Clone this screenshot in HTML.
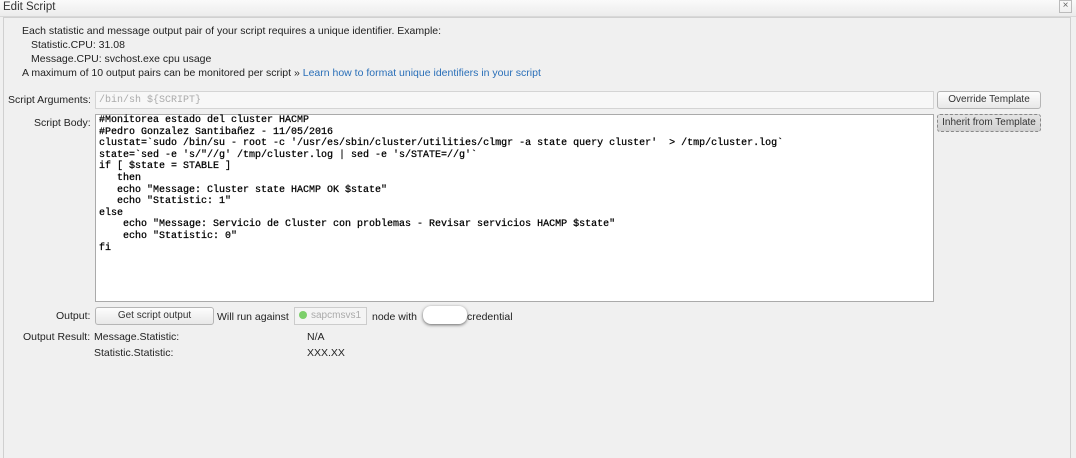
<!DOCTYPE html>
<html><head><style>
body{margin:0;width:1076px;height:452px;background:#f0f0f0;font-family:"Liberation Sans",sans-serif;font-size:10.5px;color:#222;position:relative;overflow:hidden}
.a{position:absolute;white-space:pre}
.title{position:absolute;left:0;top:0;width:1076px;height:16px;background:linear-gradient(#fafafa,#ececec);border-bottom:1px solid #d8d8d8}
.panel{position:absolute;left:3px;top:17px;width:1066px;height:440px;border:1px solid #d0d0d0;border-bottom:none;background:#f0f0f0}
.inp{position:absolute;background:#f7f7f7;border:1px solid #d4d4d4}
.btn{position:absolute;border:1px solid #b5b5b5;border-radius:3px;background:linear-gradient(#fdfdfd,#e8e8e8);text-align:center;font-size:10px;color:#333}
.mono{font-family:"Liberation Mono",monospace;font-size:10px;line-height:11.6px;color:#000;-webkit-text-stroke:0.25px #000}
</style></head><body>
<div class="title"></div>
<div class="a" style="left:3px;top:1px;font-size:11.5px;color:#333">Edit Script</div>
<div class="a" style="left:1059px;top:0;width:11px;height:11px;border:1px solid #bbb;font-size:10px;line-height:10px;text-align:center;color:#666">×</div>
<div class="panel"></div>
<div class="a" style="left:22px;top:25px">Each statistic and message output pair of your script requires a unique identifier. Example:</div>
<div class="a" style="left:31px;top:39px">Statistic.CPU: 31.08</div>
<div class="a" style="left:31px;top:53px">Message.CPU: svchost.exe cpu usage</div>
<div class="a" style="left:22px;top:67px">A maximum of 10 output pairs can be monitored per script » <span style="color:#2a6fb8">Learn how to format unique identifiers in your script</span></div>
<div class="a" style="left:8px;top:94px">Script Arguments:</div>
<div class="inp" style="left:95px;top:91px;width:837px;height:16px"></div>
<div class="a mono" style="left:99px;top:95px;color:#aaa;-webkit-text-stroke:0">/bin/sh ${SCRIPT}</div>
<div class="btn" style="left:937px;top:91px;width:102px;height:16px;line-height:16px">Override Template</div>
<div class="btn" style="left:937px;top:114px;width:102px;height:16px;line-height:16px;background:linear-gradient(#e4e4e4,#d0d0d0);border-style:dashed;border-color:#888">Inherit from Template</div>
<div class="a" style="left:34px;top:117px">Script Body:</div>
<div class="inp" style="left:95px;top:114px;width:837px;height:186px;background:#fff;border-color:#aaa"></div>
<div class="a mono" style="left:99px;top:115px">#Monitorea estado del cluster HACMP
#Pedro Gonzalez Santibañez - 11/05/2016
clustat=`sudo /bin/su - root -c '/usr/es/sbin/cluster/utilities/clmgr -a state query cluster'  > /tmp/cluster.log`
state=`sed -e 's/"//g' /tmp/cluster.log | sed -e 's/STATE=//g'`
if [ $state = STABLE ]
   then
   echo "Message: Cluster state HACMP OK $state"
   echo "Statistic: 1"
else
    echo "Message: Servicio de Cluster con problemas - Revisar servicios HACMP $state"
    echo "Statistic: 0"
fi</div>
<div class="a" style="left:56px;top:310px">Output:</div>
<div class="btn" style="left:95px;top:307px;width:117px;height:16px;line-height:16px">Get script output</div>
<div class="a" style="left:217px;top:311px">Will run against</div>
<div class="a" style="left:294px;top:307px;width:71px;height:16px;border:1px solid #ccc;background:#f4f4f4;color:#aaa;line-height:16px;font-size:10px"><span style="display:inline-block;width:8px;height:8px;border-radius:50%;background:#7ccf6a;margin:0 4px 0 4px;vertical-align:-1px"></span>sapcmsvs1</div>
<div class="a" style="left:372px;top:311px">node with</div>
<div class="a" style="left:423px;top:306px;width:44px;height:18px;border-radius:8px;background:#fff;box-shadow:0 1px 3px #666"></div>
<div class="a" style="left:467px;top:311px">credential</div>
<div class="a" style="left:23px;top:331px">Output Result:</div>
<div class="a" style="left:94px;top:331px">Message.Statistic:</div>
<div class="a" style="left:307px;top:331px">N/A</div>
<div class="a" style="left:94px;top:347px">Statistic.Statistic:</div>
<div class="a" style="left:307px;top:347px">XXX.XX</div>
</body></html>
